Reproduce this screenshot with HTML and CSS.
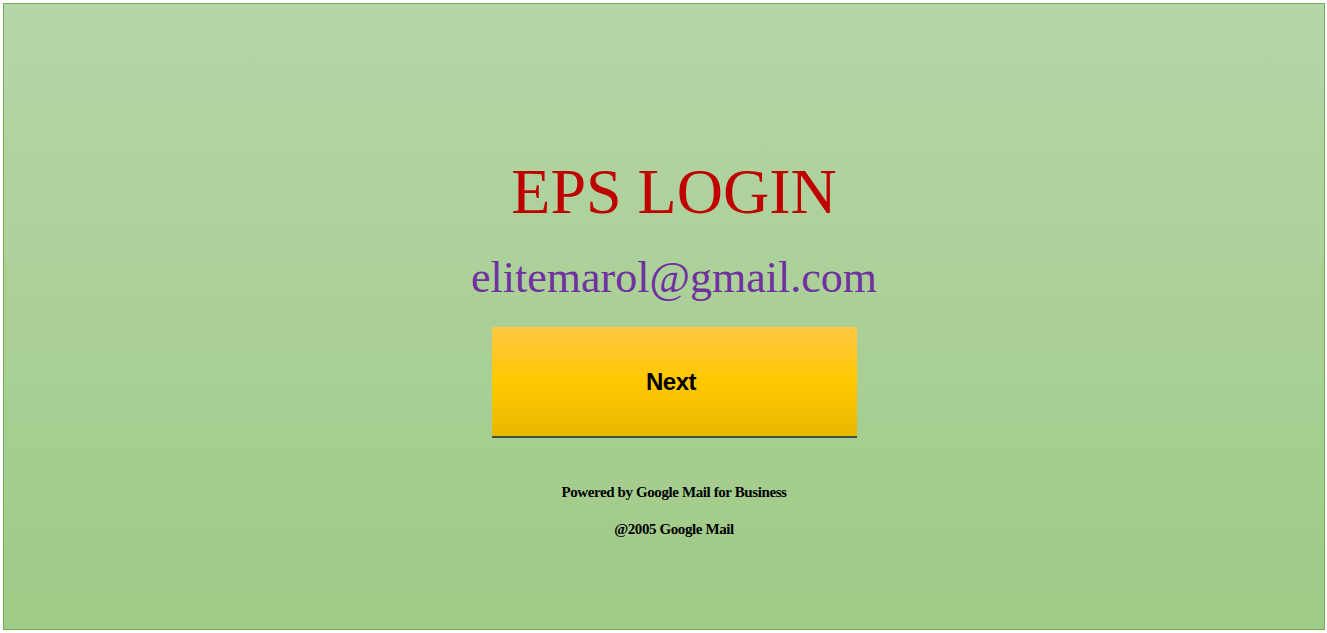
FILE: index.html
```html
<!DOCTYPE html>
<html lang="en">
<head>
<meta charset="utf-8">
<title>EPS LOGIN</title>
<link rel="stylesheet" href="styles.css">
</head>
<body>
<div class="frame">
  <main class="content">
    <h1 class="title">EPS LOGIN</h1>
    <p class="email">elitemarol@gmail.com</p>
    <button class="next-btn" type="button">Next</button>
    <p class="footer-line first">Powered by Google Mail for Business</p>
    <p class="footer-line">@2005 Google Mail</p>
  </main>
</div>
</body>
</html>
```
FILE: styles.css
```css
html, body {
  margin: 0;
  padding: 0;
}
body {
  width: 1327px;
  height: 633px;
  overflow: hidden;
  font-family: "Liberation Serif", "Times New Roman", serif;
}
.frame {
  box-sizing: border-box;
  margin: 3px 2px 0 3px;
  width: 1322px;
  height: 627px;
  border: 1px solid #74ad4e;
  background: linear-gradient(to bottom, #b5d6a7 0%, #9fca87 100%);
}
.content {
  display: flex;
  flex-direction: column;
  align-items: center;
  padding-left: 20px;
  padding-top: 156px;
}
.title {
  margin: 0;
  font-size: 64px;
  line-height: 64px;
  font-weight: normal;
  color: #c00000;
}
.email {
  margin: 29px 0 0;
  font-size: 44px;
  line-height: 50px;
  color: #7030a0;
}
.next-btn {
  box-sizing: border-box;
  margin-top: 24px;
  width: 365px;
  height: 111px;
  border: 0;
  border-bottom: 2px solid #3f4f3c;
  padding: 0 6px 0 0;
  background: linear-gradient(to bottom, #ffc845 0%, #ffc800 50%, #e8b800 100%);
  font-family: "Liberation Sans", Arial, sans-serif;
  font-weight: bold;
  font-size: 24px;
  letter-spacing: -0.5px;
  color: #000;
  display: flex;
  align-items: center;
  justify-content: center;
}
.footer-line {
  margin: 19px 0 0;
  font-size: 15px;
  line-height: 18px;
  font-weight: bold;
  letter-spacing: -0.4px;
  color: #000;
}
.footer-line.first {
  margin-top: 45px;
}
```
